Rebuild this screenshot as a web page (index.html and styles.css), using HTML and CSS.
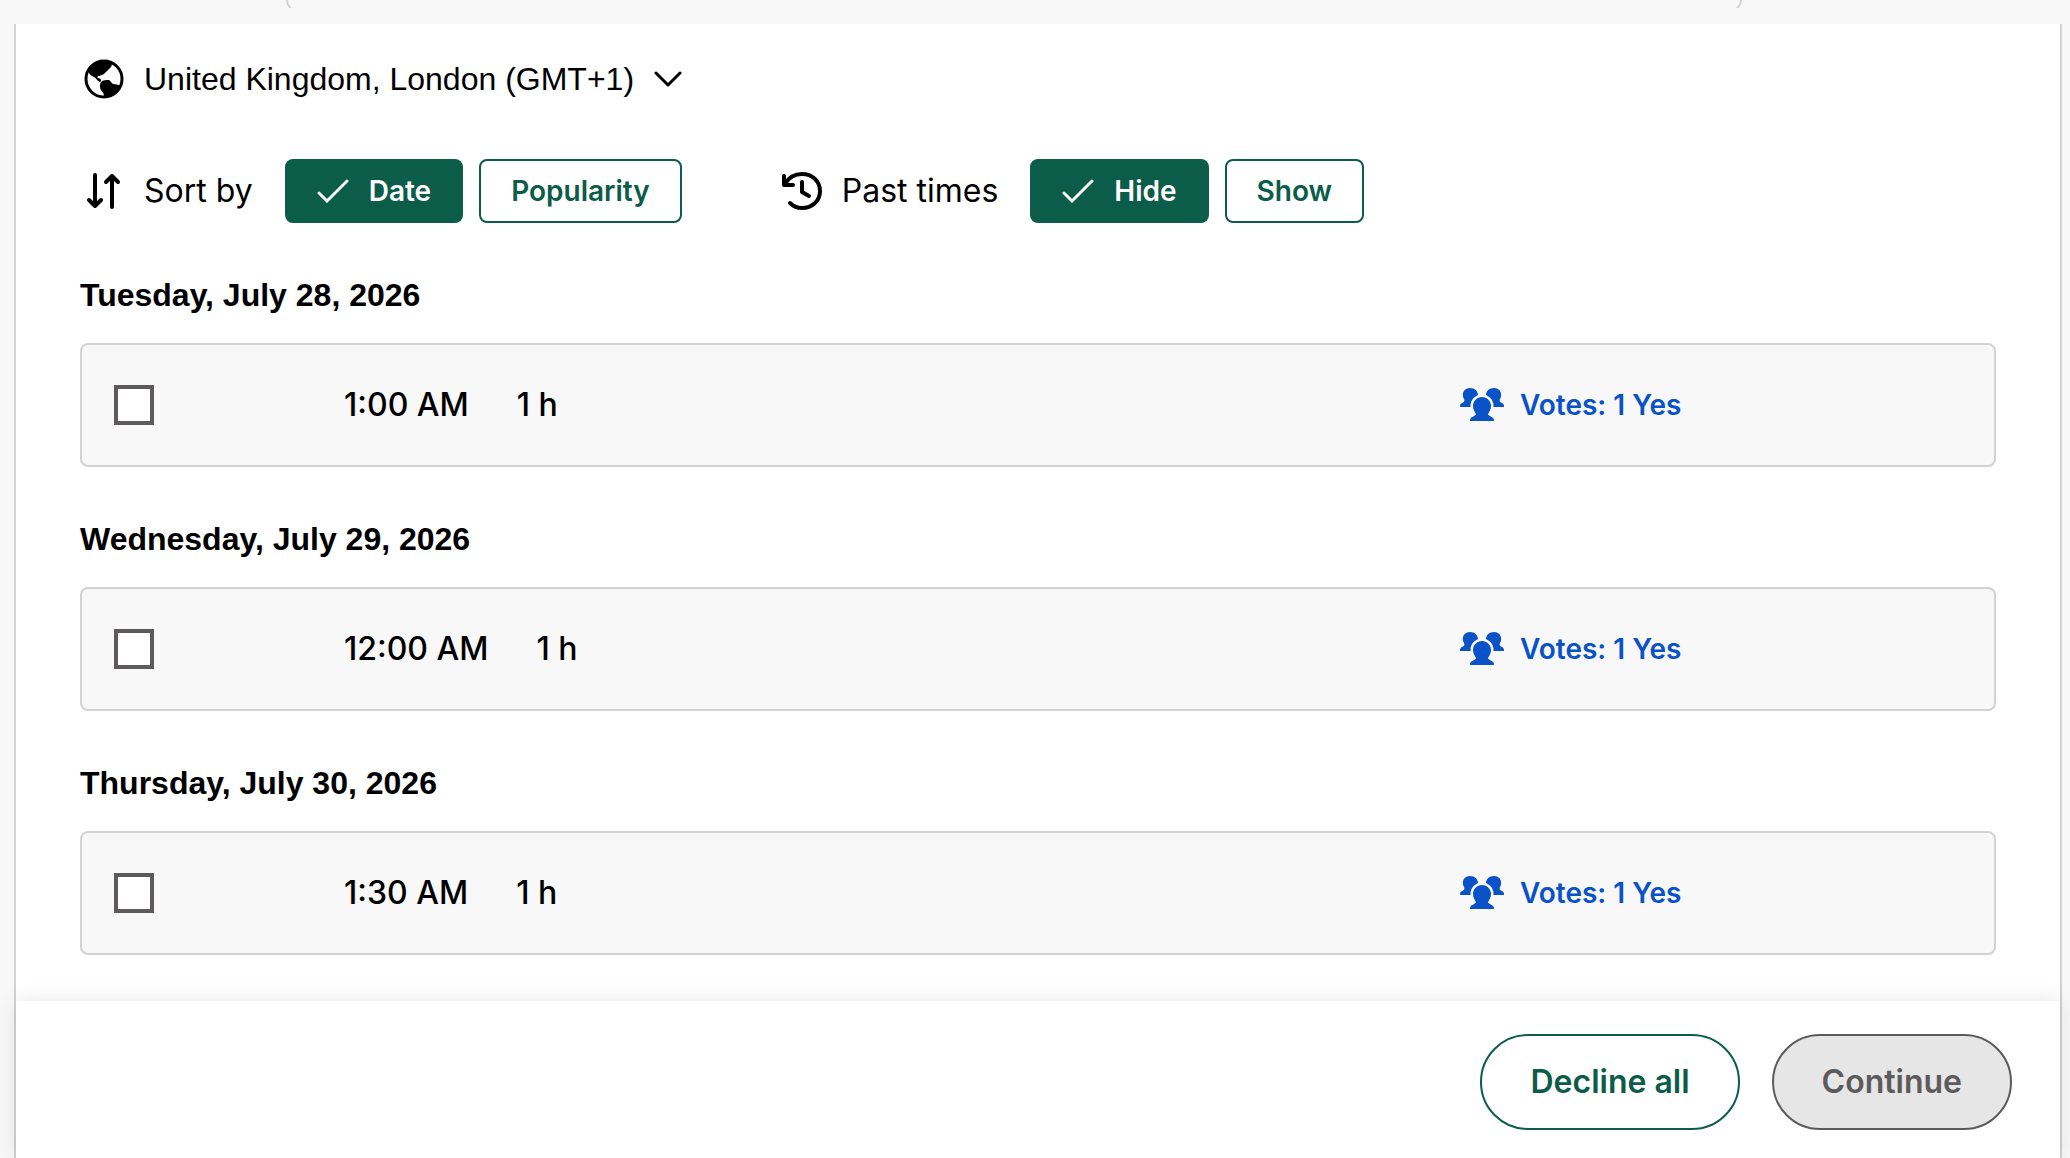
FILE: index.html
```
<!DOCTYPE html>
<html lang="en">
<head>
    <meta charset="UTF-8">
    <meta name="viewport" content="width=device-width, initial-scale=1.0">
    <title>Select your times</title>
    <link rel="stylesheet" href="styles.css">
</head>
<body>

    <!-- shared icons -->
    <svg class="sprite" aria-hidden="true">
        <symbol id="icon-check" viewBox="0 0 32 24">
            <path d="M2 14l8 8L30 2" fill="none" stroke="currentColor" stroke-width="3" stroke-linecap="round"/>
        </symbol>
        <symbol id="icon-people" viewBox="0 0 44 34">
            <path d="M10 0c5 0 8 3 8 7.500c0 3-2 5-3 7.500l-1 4H1c-2 0-1-3 1-4 2-1 3-2 2-4C1 6 4 0 10 0z"/>
            <path d="M34 0c-5 0-8 3-8 7.500c0 3 2 5 3 7.500l1 4h13c2 0 1-3-1-4-2-1-3-2-2-4 3-5 0-11-6-11z"/>
            <path class="icon-people-front" d="M22 9c5 0 9 4 9 9 0 4-2 6-3 8 0 2 6 3 6 6 0 1-.5 1-1 1H11c-.5 0-1 0-1-1 0-3 6-4 6-6-1-2-3-4-3-8 0-5 4-9 9-9z"/>
        </symbol>
    </svg>

    <div class="previous-box"><div class="previous-box-edge"></div></div>

    <main class="panel">
        <div class="content">
            <button class="timezone" type="button">
                <svg class="icon" viewBox="0 0 40 40">
                    <circle cx="20" cy="20" r="18" fill="none" stroke="currentColor" stroke-width="3"/>
                    <path d="M28 4c0 3-1 4-3 6l-4 4c-2 2-4 2-6 3-2 0-2 2-1 2 2 0 3 1 3 3l-1 1c-3-1-4-4-6-5-3-1-5-3-6-6C8 6 18-1 28 4z"/>
                    <path d="M17 23c2-2 5-2 8-2 2 1 2 3 4 4 3 0 6 1 8 2-2 6-8 11-16 11l-1-1c0-4-4-5-4-9 0-2 0-3 1-5z"/>
                </svg>
                <span>United Kingdom, London (GMT+1)</span>
                <svg class="icon-chevron" viewBox="0 0 28 16"><path d="M2 2l12 12L26 2" fill="none" stroke="currentColor" stroke-width="3" stroke-linecap="round" stroke-linejoin="round"/></svg>
            </button>

            <div class="filters">
                <div class="filter" role="group" aria-labelledby="sort-label">
                    <svg class="icon" viewBox="0 0 40 40"><path d="M11 4v31M5 29l6 6 6-6M28 36V5M22 11l6-6 6 6" fill="none" stroke="currentColor" stroke-width="4" stroke-linecap="round" stroke-linejoin="round"/></svg>
                    <span class="filter-label" id="sort-label">Sort by</span>
                    <div class="toggles">
                        <button class="toggle active" type="button" aria-pressed="true"><svg class="icon-check"><use href="#icon-check"/></svg>Date</button>
                        <button class="toggle" type="button" aria-pressed="false">Popularity</button>
                    </div>
                </div>
                <div class="filter" role="group" aria-labelledby="past-label">
                    <svg class="icon" viewBox="0 0 40 40"><path d="M2 5v9h9M3 13C7 6 13 3 20 3c10 0 18 7 18 17s-8 17-18 17c-5 0-9-2-12-5M20 11v10l7 4" fill="none" stroke="currentColor" stroke-width="4" stroke-linecap="round" stroke-linejoin="round"/></svg>
                    <span class="filter-label" id="past-label">Past times</span>
                    <div class="toggles">
                        <button class="toggle active" type="button" aria-pressed="true"><svg class="icon-check"><use href="#icon-check"/></svg>Hide</button>
                        <button class="toggle" type="button" aria-pressed="false">Show</button>
                    </div>
                </div>
            </div>

            <section class="day">
                <h2>Tuesday, July 28, 2026</h2>
                <div class="slot">
                    <input type="checkbox" id="slot-1">
                    <label for="slot-1"><span>1:00 AM</span><span>1 h</span></label>
                    <button class="votes" type="button"><svg class="icon-people"><use href="#icon-people"/></svg>Votes: 1 Yes</button>
                </div>
            </section>

            <section class="day">
                <h2>Wednesday, July 29, 2026</h2>
                <div class="slot">
                    <input type="checkbox" id="slot-2">
                    <label for="slot-2"><span>12:00 AM</span><span>1 h</span></label>
                    <button class="votes" type="button"><svg class="icon-people"><use href="#icon-people"/></svg>Votes: 1 Yes</button>
                </div>
            </section>

            <section class="day">
                <h2>Thursday, July 30, 2026</h2>
                <div class="slot">
                    <input type="checkbox" id="slot-3">
                    <label for="slot-3"><span>1:30 AM</span><span>1 h</span></label>
                    <button class="votes" type="button"><svg class="icon-people"><use href="#icon-people"/></svg>Votes: 1 Yes</button>
                </div>
            </section>
        </div>

        <div class="actions">
            <button class="btn" type="button">Decline all</button>
            <button class="btn" type="button" disabled>Continue</button>
        </div>
    </main>

</body>
</html>
```
FILE: styles.css
```
:root {
    --green: #0b5c49;
    --blue: #0a52c8;
    --grey-text: #5c5a5a;
    --grey-border: #d2d2d2;
    --grey-bg: #f8f8f8;
}

* {
    box-sizing: border-box;
}

body {
    margin: 0;
    padding: 0 8px 0 14px;
    min-height: 100vh;
    display: flex;
    flex-direction: column;
    font-family: "Inter", "Liberation Sans", sans-serif;
    font-size: 32px;
    line-height: 40px;
    color: #000;
    background: var(--grey-bg);
}

button {
    font: inherit;
    color: inherit;
    background: none;
    border: none;
    padding: 0;
    cursor: pointer;
}

.sprite {
    display: none;
}

/* bottom edge of the box above the list */
.previous-box {
    height: 8px;
    margin: 0 320px 16px 272px;
    display: flex;
    align-items: flex-end;
    overflow: hidden;
}

.previous-box-edge {
    flex: 1;
    height: 24px;
    margin-bottom: -4px;
    border: 2px solid var(--grey-border);
    border-radius: 16px;
}

.panel {
    flex: 1;
    display: flex;
    flex-direction: column;
    background: #fff;
    border: 2px solid var(--grey-border);
    border-width: 0 2px;
}

.content {
    flex: 1;
    padding: 35px 64px 46px;
}

.icon {
    width: 40px;
    height: 40px;
    flex: none;
}

.timezone {
    display: flex;
    align-items: center;
    gap: 20px;
    padding-left: 4px;
    height: 40px;
    font-family: "Liberation Sans", sans-serif;
}

.icon-chevron {
    width: 28px;
    height: 16px;
}

/* sort and past times */
.filters {
    display: flex;
    gap: 96px;
    margin-top: 60px;
}

.filter {
    display: flex;
    align-items: center;
    padding-left: 4px;
}

.filter-label {
    margin: 0 32px 0 20px;
}

.toggles {
    display: flex;
    gap: 16px;
}

.toggle {
    display: flex;
    align-items: center;
    gap: 20px;
    height: 64px;
    padding: 0 30px;
    font-size: 28px;
    font-weight: 600;
    color: var(--green);
    border: 2px solid var(--green);
    border-radius: 8px;
}

.toggle.active {
    color: #fff;
    background: var(--green);
}

.icon-check {
    width: 32px;
    height: 24px;
}

/* days */
.day {
    margin-top: 52px;
}

.day h2 {
    margin: 0 0 28px;
    font-family: "Liberation Sans", sans-serif;
    font-size: 32px;
    font-weight: 700;
}

.slot {
    display: grid;
    grid-template-columns: 230px 1fr 534px;
    align-items: center;
    height: 124px;
    padding-left: 32px;
    background: var(--grey-bg);
    border: 2px solid var(--grey-border);
    border-radius: 8px;
}

.slot input {
    appearance: none;
    width: 40px;
    height: 40px;
    margin: 0;
    background: #fff;
    border: 4px solid var(--grey-text);
}

.slot label {
    display: flex;
    gap: 48px;
    font-weight: 500;
}

.votes {
    display: flex;
    align-items: center;
    gap: 16px;
    font-size: 28px;
    font-weight: 600;
    color: var(--blue);
}

.icon-people {
    width: 44px;
    height: 34px;
    fill: currentColor;
}

/* ring that separates the front figure from the two behind */
.icon-people-front {
    stroke: var(--grey-bg);
    stroke-width: 5px;
    paint-order: stroke;
}

/* bottom bar */
.actions {
    display: flex;
    justify-content: flex-end;
    gap: 32px;
    padding: 33px 48px 28px;
    background: #fff;
    box-shadow: 0 0 20px rgba(0, 0, 0, 0.1);
}

.btn {
    height: 96px;
    padding: 0 48px;
    font-weight: 600;
    color: var(--green);
    border: 2px solid var(--green);
    border-radius: 48px;
}

.btn:disabled {
    color: var(--grey-text);
    background: #e6e6e6;
    border-color: var(--grey-text);
}
```
